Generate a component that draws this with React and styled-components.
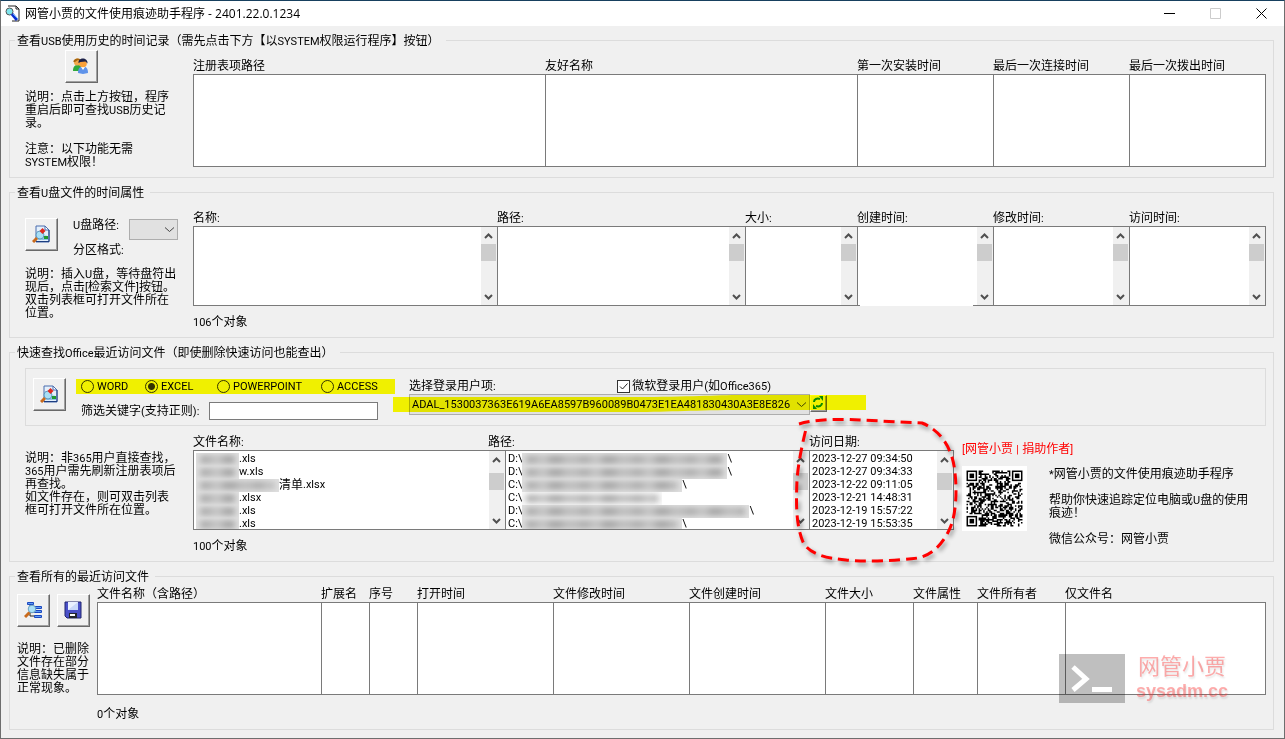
import React, { useState } from "react";
import styled, { createGlobalStyle, css } from "styled-components";

const GlobalStyle = createGlobalStyle`
  *, *::before, *::after { box-sizing: border-box; }
  html, body { margin: 0; padding: 0; }
  body, button, input, select {
    font-family: "Liberation Sans", "Noto Sans CJK SC", sans-serif;
    font-size: 12px;
    line-height: 13px;
    color: #000;
  }
`;

/* ---------- window frame ---------- */

const Window = styled.div`
  position: relative;
  min-height: 100vh;
  background: #f0f0f0;
  border: 1px solid #6e6e6e;
  border-top-color: #17405f;
`;

const TitleBar = styled.header`
  display: flex;
  align-items: center;
  height: 25px;
  padding-left: 3px;
  background: #fff;
`;

const Title = styled.h1`
  flex: 1;
  margin: 0 0 0 4px;
  font: 400 12px/16px "Open Sans", "Noto Sans CJK SC", sans-serif;
  white-space: nowrap;
`;

const CaptionButton = styled.button`
  display: flex;
  align-items: center;
  justify-content: center;
  width: 46px;
  height: 25px;
  padding: 0;
  border: 0;
  background: transparent;
  color: ${(p) => (p.disabled ? "#ccc" : "#000")};
`;

const Body = styled.main`
  display: flex;
  flex-direction: column;
  gap: 8px;
  padding: 8px 10px 8px 8px;
`;

/* ---------- groups ---------- */

const Group = styled.fieldset`
  min-width: 0;
  margin: 0;
  padding: 0 7px 8px 0;
  border: 1px solid #dcdcdc;
`;

const Legend = styled.legend`
  margin-left: 5px;
  padding: 1px 6px 0 2px;
  height: 13px;
  white-space: nowrap;
`;

const Columns = styled.div`
  display: flex;
  align-items: flex-start;
`;

const Side = styled.div`
  flex: none;
  width: ${(p) => (p.$narrow ? 87 : 183)}px;
  padding: ${(p) => p.$top}px 0 0 ${(p) => (p.$narrow ? 7 : 15)}px;
`;

const Content = styled.div`
  position: relative;
  flex: 1;
  min-width: 0;
  padding-top: ${(p) => p.$top}px;
`;

const NoteText = styled.p`
  margin: ${(p) => p.$gap || 0}px 0 0;
  white-space: nowrap;
`;

const NoteLine = styled.span`
  display: block;
  height: 13px;
`;

const Latin = styled.span`
  font-family: Roboto, "Liberation Sans", sans-serif;
  font-size: 11px;
  line-height: 11px;
`;

const Count = styled.output`
  display: block;
  margin-top: ${(p) => p.$gap}px;
`;

const ToolButton = styled.button`
  display: flex;
  flex: none;
  align-items: center;
  justify-content: center;
  width: 33px;
  height: 33px;
  padding: 0 2px 2px 0;
  background: #f0f0f0;
  border: 1px solid;
  border-color: #fff #696969 #696969 #fff;
  box-shadow: inset -1px -1px 0 #a0a0a0;
`;

const ButtonRow = styled.div`
  display: flex;
  gap: ${(p) => p.$gap}px;
  justify-content: ${(p) => (p.$center ? "center" : "flex-start")};
  padding-right: ${(p) => (p.$center ? 55 : 0)}px;
`;

const DriveFields = styled.div`
  display: grid;
  grid-template-columns: 56px 49px;
  grid-template-rows: 21px 13px;
  row-gap: 4px;
  padding-top: 1px;
`;

/* ---------- list tables ---------- */

const ListTable = styled.table`
  width: 100%;
  table-layout: fixed;
  border-spacing: 0;
`;

const HeadCell = styled.th`
  height: 16px;
  padding: 2px 0 1px;
  font-weight: 400;
  text-align: left;
  white-space: nowrap;
`;

const ListCell = styled.td`
  position: relative;
  height: ${(p) => p.$height}px;
  padding: 0;
  background: #fff;
  border: solid #7a7a7a;
  border-width: 1px 0 1px 1px;
  &:last-child { border-right-width: 1px; }
  ${(p) => p.$erased && css`
    &::after {
      content: "";
      position: absolute;
      left: 2px;
      right: 20px;
      bottom: -1px;
      height: 1px;
      background: #fff;
    }
  `}
`;

const ListFrame = styled.div`
  display: flex;
  height: 78px;
`;

const Items = styled.ul`
  flex: 1;
  min-width: 0;
  margin: 0;
  padding: 2px 0 0 2px;
  overflow: hidden;
  list-style: none;
  li {
    display: flex;
    height: 13px;
    white-space: pre;
  }
`;

const Track = styled.div`
  display: flex;
  flex: none;
  flex-direction: column;
  align-items: center;
  width: 16px;
  padding-right: 1px;
  background: #f0f0f0;
  svg:last-child { margin-top: auto; }
`;

const Thumb = styled.div`
  width: 15px;
  height: 17px;
  margin-top: ${(p) => (p.$scrolled ? 5 : 0)}px;
  background: #cdcdcd;
`;

const Smudge = styled.span`
  flex: none;
  width: ${(p) => p.$width}px;
  height: 13px;
  overflow: hidden;
  background: ${(p) => (p.$fade ? "#fafafa" : "#e0e0e0")};
  &::before {
    content: "";
    display: block;
    height: 7px;
    margin: 3px 4px;
    filter: blur(3px);
    background: repeating-linear-gradient(
      95deg, #a6a6a6 0 9px, #bababa 13px 21px, #9c9c9c 25px 34px, #b4b4b4 40px 53px
    );
  }
`;

/* ---------- office filter panel ---------- */

const Panel = styled.div`
  position: relative;
  display: flex;
  align-items: flex-start;
  height: 58px;
  margin: 9px 0 0 15px;
  padding: 9px 0 0 7px;
  border: 1px solid #dcdcdc;
`;

const Filters = styled.div`
  width: 319px;
  margin: 1px 14px 0 10px;
`;

const RadioRow = styled.div`
  display: grid;
  grid-template-columns: 64px 72px 104px auto;
  align-items: center;
  height: 15px;
  padding-left: 5px;
  background: #f0f000;
`;

const Choice = styled.label`
  display: flex;
  align-items: center;
  gap: ${(p) => p.$gap || 3}px;
  white-space: nowrap;
`;

const Radio = styled.input`
  appearance: none;
  width: 13px;
  height: 13px;
  margin: 0;
  border: 1px solid #333300;
  border-radius: 50%;
  &:checked { background: radial-gradient(circle, #333300 3px, transparent 4px); }
`;

const CheckWrap = styled.span`
  display: grid;
  > * { grid-area: 1 / 1; }
  svg { pointer-events: none; }
`;

const Check = styled.input`
  appearance: none;
  width: 13px;
  height: 13px;
  margin: 0;
  background: #fff;
  border: 1px solid #333;
`;

const KeywordRow = styled.div`
  display: flex;
  align-items: center;
  margin-top: 8px;
  padding-left: 5px;
  label { width: 128px; white-space: nowrap; }
`;

const TextBox = styled.input`
  width: 169px;
  height: 18px;
  padding: 0 3px;
  background: #fff;
  border: 1px solid #7a7a7a;
`;

const UserBlock = styled.div`
  width: 458px;
`;

const UserHead = styled.div`
  display: flex;
  justify-content: space-between;
  align-items: center;
  width: 362px;
  height: 16px;
`;

const UserRow = styled.div`
  position: relative;
  display: flex;
`;

const ComboWrap = styled.div`
  display: grid;
  width: ${(p) => p.$width}px;
  height: 21px;
  > * { grid-area: 1 / 1; }
  svg { place-self: center end; margin-right: 3px; pointer-events: none; }
`;

const Combo = styled.select`
  appearance: none;
  width: 100%;
  height: 21px;
  padding: 0 14px 0 2px;
  font-family: Roboto, "Liberation Sans", sans-serif;
  font-size: 11px;
  background: #e1e1e1;
  border: 1px solid #adadad;
  border-radius: 0;
  opacity: 1;
`;

const SmallButton = styled(ToolButton)`
  width: 17px;
  height: 17px;
  margin-top: 1px;
`;

const Marker = styled.svg`
  position: absolute;
  left: -16px;
  top: 0;
  mix-blend-mode: multiply;
  pointer-events: none;
`;

/* ---------- author block ---------- */

const Author = styled.aside`
  flex: none;
  width: 312px;
  padding: 17px 0 0 8px;
`;

const Donate = styled.a`
  color: #f00;
  text-decoration: none;
  white-space: nowrap;
`;

const AuthorRow = styled.div`
  display: flex;
  gap: 22px;
  margin-top: 10px;
`;

const RedLoop = styled.svg`
  position: absolute;
  right: -14px;
  top: -14px;
  filter: drop-shadow(2px 3px 2px rgba(0, 0, 0, 0.4));
  pointer-events: none;
`;

const Watermark = styled.div`
  position: absolute;
  right: 56px;
  bottom: 35px;
  display: flex;
  gap: 11px;
  pointer-events: none;
`;

const Brand = styled.div`
  color: rgba(255, 50, 50, 0.4);
  text-align: center;
  text-shadow: 1px 2px 2px rgba(0, 0, 0, 0.1);
  font-size: 18px;
  font-weight: 700;
  line-height: 24px;
  b { display: block; font-weight: 400; font-size: 22px; line-height: 25px; }
`;

/* ---------- drawings ---------- */

const AppIcon = () => (
  <svg width="17" height="17" viewBox="0 0 17 17">
    <path d="M4 1h8l3 3v12H8" fill="#fff" stroke="#222" />
    <path d="M12 1v3h3" fill="none" stroke="#222" />
    <circle cx="5.500" cy="6.500" r="3.500" fill="#7fe5ee" stroke="#555" />
    <path d="M8 9l5 6" stroke="#0b2ed0" strokeWidth="3" />
    <path d="M9 9l5 5" stroke="#58a8ff" />
  </svg>
);

const UsersIcon = () => (
  <svg width="18" height="18" viewBox="0 0 18 18">
    <path d="M1 14c0-5 2-6 5-6s4 2 4 6z" fill="#2faa3c" />
    <circle cx="5.500" cy="5" r="3.600" fill="#f2a94c" />
    <path d="M1.500 5C1 1 9 0 9 4l-3-1-3 2z" fill="#a9660d" />
    <path d="M6 16c0-5 2-6.500 5-6.500s5 1.500 5 6.500l-5 1z" fill="#5f93ea" />
    <path d="M9 10l2 3 2-3z" fill="#fff" />
    <circle cx="11" cy="6.500" r="3.800" fill="#f9a03a" />
    <path d="M6.500 6C6 0 16 0 15.500 6.500l-2-2-5 .5z" fill="#1d2148" />
  </svg>
);

const SearchFileIcon = () => (
  <svg width="18" height="18" viewBox="0 0 18 18">
    <path d="M4 1h9l4 4v12H4z" fill="#e4f0fb" stroke="#4a6cae" />
    <path d="M13 1v4h4z" fill="#fff" stroke="#4a6cae" />
    <path d="M4 16.500h13V5" fill="none" stroke="#1c3d80" />
    <path d="M6 12l2-2 3 3 3-3 2 3v2H6z" fill="#8fc4e8" />
    <path d="M12 11h4v3h-4z" fill="#1f9a2f" />
    <circle cx="8" cy="10" r="4" fill="#a8dff5" stroke="#5f9cc4" />
    <path d="M10.500 3l3 3-3 3-3-3z" fill="#e02a20" />
    <path d="M5 13l-4 4" stroke="#c96a1c" strokeWidth="3" />
  </svg>
);

const SearchTreeIcon = () => (
  <svg width="18" height="18" viewBox="0 0 18 18">
    <path d="M6 4v11h5M6 7h5M6 11h5" fill="none" stroke="#222" />
    <path d="M3.500 1.500h6v2h-6zM10.500 5.500h7v2h-7zM10.500 9.500h7v2h-7zM10.500 14.500h7v2h-7z" fill="#5f9cf4" stroke="#1b48c0" />
    <circle cx="8" cy="8" r="3.800" fill="#a9e0f7" stroke="#6a9fc0" />
    <path d="M5.500 11.500L1 16" stroke="#c96a1c" strokeWidth="3" />
  </svg>
);

const SaveIcon = () => (
  <svg width="18" height="18" viewBox="0 0 18 18">
    <path d="M1 1h16v16H3l-2-2z" fill="#4a50c8" stroke="#20246e" />
    <path d="M4 1h10v8H4z" fill="#e9f0ff" />
    <path d="M4 9l10-8v8z" fill="#c9d8fa" />
    <path d="M5 12h8v5H5z" fill="#23262e" />
    <path d="M6 13h5v2H6z" fill="#fff" />
  </svg>
);

const RefreshIcon = () => (
  <svg width="13" height="13" viewBox="0 0 13 13" fill="none" stroke="#0a8a26" strokeWidth="2">
    <path d="M3 6c0-3 3-4 6-3M11 7c0 3-3 4-6 3" />
    <path d="M8 0h4v5zM6 13H2V8z" fill="#0a8a26" stroke="none" />
  </svg>
);

const Chevron = ({ up, thin }) => (
  <svg width="11" height={thin ? 11 : 17} viewBox="0 0 11 11" fill="none"
    stroke={thin ? "#444" : "#505050"} strokeWidth={thin ? 1 : 2}>
    {thin ? <path d="M1 3.500l4.500 4 4.500-4" /> : <path d={up ? "M2 8l3.500-3.500L9 8" : "M2 4l3.500 3.500L9 4"} />}
  </svg>
);

const QR_SIZE = 37;

function qrPath() {
  let seed = 20231227;
  let d = "";
  const corner = (x, y) => (x < 8 && y < 8) || (x > 28 && y < 8) || (x < 8 && y > 28);
  for (let y = 0; y < QR_SIZE; y++) {
    for (let x = 0; x < QR_SIZE; x++) {
      seed = (seed * 1103515245 + 12345) % 2147483648;
      if (!corner(x, y) && seed / 2147483648 > 0.47) d += `M${x} ${y}h1v1h-1z`;
    }
  }
  return d;
}

const QrCode = () => (
  <svg width="65" height="65" viewBox="-3 -3 43 43" role="img" aria-label="微信公众号二维码">
    <rect x="-3" y="-3" width="43" height="43" fill="#fff" />
    <path d={qrPath()} />
    {[[0, 0], [30, 0], [0, 30]].map(([x, y]) => (
      <g key={`${x}-${y}`}>
        <rect x={x + 0.5} y={y + 0.5} width="6" height="6" fill="#fff" stroke="#000" />
        <rect x={x + 2} y={y + 2} width="3" height="3" />
      </g>
    ))}
  </svg>
);

/* ---------- pieces ---------- */

/* Latin runs are set one size smaller than the Chinese text around them. */
const mixed = (text) =>
  text.split(/([\x21-\x7e]+(?: [\x21-\x7e]+)*)/).map((part, i) =>
    i % 2 ? <Latin key={i}>{part}</Latin> : part
  );

const Note = ({ gap, lines }) => (
  <NoteText $gap={gap}>
    {lines.map((line, i) => <NoteLine key={i}>{mixed(line)}</NoteLine>)}
  </NoteText>
);

const ScrollBar = ({ scrolled }) => (
  <Track aria-hidden="true">
    <Chevron up />
    <Thumb $scrolled={scrolled} />
    <Chevron />
  </Track>
);

function Lists({ columns, height, scroll }) {
  return (
    <ListTable>
      <colgroup>
        {columns.map((c) => <col key={c.label} style={c.width ? { width: c.width } : undefined} />)}
      </colgroup>
      <thead>
        <tr>{columns.map((c) => <HeadCell key={c.label} scope="col">{mixed(c.label)}</HeadCell>)}</tr>
      </thead>
      <tbody>
        <tr>
          {columns.map((c) => (
            <ListCell key={c.label} $height={height} $erased={c.erased}>
              {scroll && <ListFrame><Items /><ScrollBar /></ListFrame>}
            </ListCell>
          ))}
        </tr>
      </tbody>
    </ListTable>
  );
}

const usbColumns = [
  { label: "注册表项路径" },
  { label: "友好名称", width: 312 },
  { label: "第一次安装时间", width: 136 },
  { label: "最后一次连接时间", width: 136 },
  { label: "最后一次拨出时间", width: 137 },
];

const driveColumns = [
  { label: "名称:" },
  { label: "路径:", width: 248 },
  { label: "大小:", width: 112 },
  { label: "创建时间:", width: 136, erased: true },
  { label: "修改时间:", width: 136 },
  { label: "访问时间:", width: 137 },
];

const recentColumns = [
  { label: "文件名称（含路径）" },
  { label: "扩展名", width: 48 },
  { label: "序号", width: 48 },
  { label: "打开时间", width: 136 },
  { label: "文件修改时间", width: 136 },
  { label: "文件创建时间", width: 136 },
  { label: "文件大小", width: 88 },
  { label: "文件属性", width: 64 },
  { label: "文件所有者", width: 88 },
  { label: "仅文件名", width: 201 },
];

const files = [
  { hidden: 43, name: ".xls", drive: "D:\\", path: 205, end: "\\", date: "2023-12-27 09:34:50" },
  { hidden: 43, name: "w.xls", drive: "D:\\", path: 205, end: "\\", date: "2023-12-27 09:34:33" },
  { hidden: 83, name: "清单.xlsx", drive: "C:\\", path: 160, end: "\\", date: "2023-12-22 09:11:05" },
  { hidden: 43, name: ".xlsx", drive: "C:\\", path: 140, fade: true, end: "", date: "2023-12-21 14:48:31" },
  { hidden: 43, name: ".xls", drive: "D:\\", path: 227, end: "\\", date: "2023-12-19 15:57:22" },
  { hidden: 43, name: ".xls", drive: "C:\\", path: 160, end: "\\", date: "2023-12-19 15:53:35" },
];

const apps = ["WORD", "EXCEL", "POWERPOINT", "ACCESS"];

export default function App() {
  const [app, setApp] = useState("EXCEL");
  const [microsoft, setMicrosoft] = useState(true);
  const [keyword, setKeyword] = useState("");

  return (
    <Window>
      <GlobalStyle />
      <TitleBar>
        <AppIcon />
        <Title>网管小贾的文件使用痕迹助手程序 - 2401.22.0.1234</Title>
        <CaptionButton aria-label="最小化">
          <svg width="11" height="11"><path d="M0 5.500h11" stroke="currentColor" /></svg>
        </CaptionButton>
        <CaptionButton aria-label="最大化" disabled>
          <svg width="11" height="11"><path d="M.5.500h10v10H.5z" fill="none" stroke="currentColor" /></svg>
        </CaptionButton>
        <CaptionButton aria-label="关闭">
          <svg width="11" height="11"><path d="M.5.500l10 10M10.500.5l-10 10" stroke="currentColor" /></svg>
        </CaptionButton>
      </TitleBar>

      <Body>
        <Group>
          <Legend>{mixed("查看USB使用历史的时间记录（需先点击下方【以SYSTEM权限运行程序】按钮）")}</Legend>
          <Columns>
            <Side $top={3}>
              <ButtonRow $center>
                <ToolButton aria-label="以SYSTEM权限运行程序"><UsersIcon /></ToolButton>
              </ButtonRow>
              <Note
                gap={8}
                lines={["说明：点击上方按钮，程序", "重启后即可查找USB历史记", "录。", "", "注意：以下功能无需", "SYSTEM权限！"]}
              />
            </Side>
            <Content $top={11}>
              <Lists columns={usbColumns} height={93} />
            </Content>
          </Columns>
        </Group>

        <Group>
          <Legend>{mixed("查看U盘文件的时间属性")}</Legend>
          <Columns>
            <Side $top={19}>
              <ButtonRow $gap={15}>
                <ToolButton aria-label="检索文件"><SearchFileIcon /></ToolButton>
                <DriveFields>
                  <label htmlFor="drive">{mixed("U盘路径:")}</label>
                  <ComboWrap $width={49}>
                    <Combo id="drive" disabled />
                    <Chevron thin />
                  </ComboWrap>
                  <span>{mixed("分区格式:")}</span>
                </DriveFields>
              </ButtonRow>
              <Note
                gap={11}
                lines={["说明：插入U盘，等待盘符出", "现后，点击[检索文件]按钮。", "双击列表框可打开文件所在", "位置。"]}
              />
            </Side>
            <Content $top={11}>
              <Lists columns={driveColumns} height={80} scroll />
              <Count $gap={10}>{mixed("106个对象")}</Count>
            </Content>
          </Columns>
        </Group>

        <Group>
          <Legend>{mixed("快速查找Office最近访问文件（即使删除快速访问也能查出）")}</Legend>
          <Panel>
            <ToolButton aria-label="查找最近访问文件"><SearchFileIcon /></ToolButton>
            <Filters>
              <RadioRow role="radiogroup" aria-label="Office">
                {apps.map((name) => (
                  <Choice key={name}>
                    <Radio type="radio" name="app" checked={app === name} onChange={() => setApp(name)} />
                    <Latin>{name}</Latin>
                  </Choice>
                ))}
              </RadioRow>
              <KeywordRow>
                <label htmlFor="keyword">{mixed("筛选关键字(支持正则):")}</label>
                <TextBox id="keyword" value={keyword} onChange={(e) => setKeyword(e.target.value)} />
              </KeywordRow>
            </Filters>
            <UserBlock>
              <UserHead>
                <label htmlFor="account">{mixed("选择登录用户项:")}</label>
                <Choice $gap={2}>
                  <CheckWrap>
                    <Check type="checkbox" checked={microsoft} onChange={(e) => setMicrosoft(e.target.checked)} />
                    {microsoft && (
                      <svg width="13" height="13"><path d="M3 6.500l2.500 2.500 5-5.500" fill="none" stroke="#222" /></svg>
                    )}
                  </CheckWrap>
                  <span>{mixed("微软登录用户(如Office365)")}</span>
                </Choice>
              </UserHead>
              <UserRow>
                <ComboWrap $width={401}>
                  <Combo id="account">
                    <option>ADAL_1530037363E619A6EA8597B960089B0473E1EA481830430A3E8E826</option>
                  </Combo>
                  <Chevron thin />
                </ComboWrap>
                <SmallButton aria-label="刷新"><RefreshIcon /></SmallButton>
                <Marker width="473" height="21">
                  <path d="M0 3h240c60 0 80-2 110-2h123v15H350c-50 0-70 2-110 2H0z" fill="#ff0" />
                </Marker>
              </UserRow>
            </UserBlock>
          </Panel>
          <Columns>
            <Side $top={26}>
              <Note
                lines={["说明：非365用户直接查找，", "365用户需先刷新注册表项后", "再查找。", "如文件存在，则可双击列表", "框可打开文件所在位置。"]}
              />
            </Side>
            <Content $top={8}>
              <ListTable>
                <colgroup>
                  <col />
                  <col style={{ width: 17 }} />
                  <col style={{ width: 304 }} />
                  <col style={{ width: 145 }} />
                </colgroup>
                <thead>
                  <tr>
                    <HeadCell scope="col">{mixed("文件名称:")}</HeadCell>
                    <HeadCell scope="col" colSpan={2}>{mixed("路径:")}</HeadCell>
                    <HeadCell scope="col">{mixed("访问日期:")}</HeadCell>
                  </tr>
                </thead>
                <tbody>
                  <tr>
                    <ListCell $height={80} colSpan={2}>
                      <ListFrame>
                        <Items>
                          {files.map((f) => <li key={f.date}><Smudge $width={f.hidden} />{mixed(f.name)}</li>)}
                        </Items>
                        <ScrollBar scrolled />
                      </ListFrame>
                    </ListCell>
                    <ListCell $height={80}>
                      <ListFrame>
                        <Items>
                          {files.map((f) => (
                            <li key={f.date}>
                              <Latin>{f.drive}</Latin>
                              <Smudge $width={f.path} $fade={f.fade} />
                              <Latin>{f.end}</Latin>
                            </li>
                          ))}
                        </Items>
                        <ScrollBar scrolled />
                      </ListFrame>
                    </ListCell>
                    <ListCell $height={80}>
                      <ListFrame>
                        <Items>
                          {files.map((f) => <li key={f.date}>{mixed(f.date)}</li>)}
                        </Items>
                        <ScrollBar scrolled />
                      </ListFrame>
                    </ListCell>
                  </tr>
                </tbody>
              </ListTable>
              <Count $gap={10}>{mixed("100个对象")}</Count>
              <RedLoop width="178" height="160" viewBox="790 412 178 160">
                <path
                  d="M799 424C815 419 840 419 860 420L922 423C942 431 953 450 955 473C957 490 956 510 952 523C946 540 935 554 918 558C895 561 865 562 846 560C825 558 809 554 803 542C796 525 796 505 797 480C798 465 802 445 806 429"
                  fill="none" stroke="#f00" strokeWidth="3" strokeDasharray="11 6"
                />
              </RedLoop>
            </Content>
            <Author>
              <Donate href="#donate">{mixed("[网管小贾 | 捐助作者]")}</Donate>
              <AuthorRow>
                <QrCode />
                <Note
                  gap={2}
                  lines={["*网管小贾的文件使用痕迹助手程序", "", "帮助你快速追踪定位电脑或U盘的使用", "痕迹！", "", "微信公众号：网管小贾"]}
                />
              </AuthorRow>
            </Author>
          </Columns>
        </Group>

        <Group>
          <Legend>查看所有的最近访问文件</Legend>
          <Columns>
            <Side $narrow $top={11}>
              <ButtonRow $gap={7}>
                <ToolButton aria-label="查找"><SearchTreeIcon /></ToolButton>
                <ToolButton aria-label="保存"><SaveIcon /></ToolButton>
              </ButtonRow>
              <Note gap={16} lines={["说明：已删除", "文件存在部分", "信息缺失属于", "正常现象。"]} />
            </Side>
            <Content $top={3}>
              <Lists columns={recentColumns} height={93} />
              <Count $gap={13}>{mixed("0个对象")}</Count>
            </Content>
          </Columns>
        </Group>
      </Body>

      <Watermark>
        <svg width="66" height="49">
          <path d="M0 0h66v49H0z" fill="#000" opacity="0.25" />
          <path d="M14 13l13 12-13 11" fill="none" stroke="#fff" strokeWidth="5" />
          <path d="M33 33h20v5H33z" fill="#fff" />
        </svg>
        <Brand><b>网管小贾</b>sysadm.cc</Brand>
      </Watermark>
    </Window>
  );
}
